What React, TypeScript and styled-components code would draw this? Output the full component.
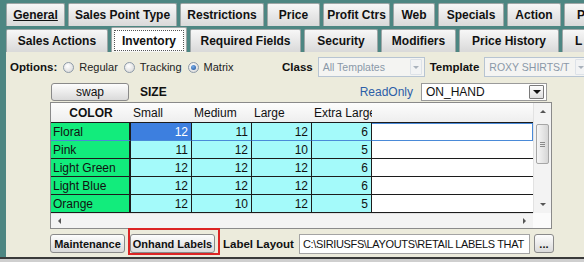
import React from "react";
import styled, { createGlobalStyle, css } from "styled-components";

const GlobalStyle = createGlobalStyle`
  html, body {
    margin: 0;
    padding: 0;
    overflow: hidden;
  }
  body {
    font-family: "Liberation Sans", Arial, sans-serif;
    font-size: 12px;
    color: #111;
  }
`;

const colors = {
  teal: "#4d8682",
  beige: "#ecebdc",
  tabBorder: "#9ea6a6",
  green: "#12ec7c",
  cyan: "#a4fafa",
  selected: "#3d7fdf",
  line: "#1c1c1c",
  focus: "#4a8ad8",
};

const Window = styled.div`
  width: 584px;
  height: 262px;
  display: flex;
  flex-direction: column;
  overflow: hidden;
`;

const Body = styled.div`
  flex: 1;
  min-height: 0;
  display: flex;
  flex-direction: column;
  background: ${colors.teal};
  padding: 3px 0 0 6px;
`;

const Footer = styled.div`
  height: 5px;
  flex-shrink: 0;
  box-sizing: border-box;
  border-top: 2px solid #3a3a3a;
  background: #cfcfcf;
`;

const TabRow = styled.div<{ $second?: boolean }>`
  display: flex;
  gap: 3px;
  flex-shrink: 0;
  overflow: hidden;
  align-items: flex-end;
  margin-top: ${(p) => (p.$second ? 1 : 0)}px;
  height: ${(p) => (p.$second ? 25 : 23)}px;
`;

const Tab = styled.div<{ $w: number; $active?: boolean; $clip?: boolean }>`
  flex: 0 0 ${(p) => p.$w}px;
  height: 23px;
  box-sizing: border-box;
  display: flex;
  align-items: center;
  justify-content: ${(p) => (p.$clip ? "flex-start" : "center")};
  padding-left: ${(p) => (p.$clip ? 12 : 0)}px;
  font-weight: bold;
  font-size: 12px;
  white-space: nowrap;
  overflow: hidden;
  background: linear-gradient(#f7f7f7, #d9d9d9);
  border: 1px solid ${colors.tabBorder};
  border-bottom: none;
  border-radius: 2px 2px 0 0;

  ${(p) =>
    p.$active &&
    css`
      height: 25px;
      padding: 2px 2px 1px;
      background: #f6f6f4;
    `}
`;

const Mnemonic = styled.span`
  text-decoration: underline;
`;

const FocusBox = styled.span`
  flex: 1;
  align-self: stretch;
  display: flex;
  align-items: center;
  justify-content: center;
  background: #fff;
  border: 1px dotted #555;
`;

const Content = styled.div`
  flex: 1;
  min-height: 0;
  display: flex;
  flex-direction: column;
  background: ${colors.beige};
  padding: 5px 0 0 4px;
`;

const OptionsRow = styled.div`
  height: 20px;
  display: flex;
  align-items: center;
  font-size: 11px;
`;

const OptionsGroup = styled.div`
  flex: 0 0 272px;
  display: flex;
  align-items: center;
`;

const FieldLabel = styled.span<{ $gap?: number }>`
  font-weight: bold;
  font-size: 11.5px;
  margin-right: ${(p) => p.$gap ?? 5}px;
  white-space: nowrap;
`;

const RadioItem = styled.label`
  display: flex;
  align-items: center;
  gap: 5px;
  margin-left: 6px;
  color: #222;
`;

const Radio = styled.span<{ $on?: boolean }>`
  width: 11px;
  height: 11px;
  box-sizing: border-box;
  border-radius: 50%;
  border: 1px solid #8d9aa8;
  background: radial-gradient(circle at 40% 35%, #ffffff, #d2d2d2);
  display: inline-flex;
  align-items: center;
  justify-content: center;

  ${(p) =>
    p.$on &&
    css`
      &::after {
        content: "";
        width: 5px;
        height: 5px;
        border-radius: 50%;
        background: radial-gradient(circle at 40% 35%, #78aee8, #1b4d96);
      }
    `}
`;

const Combo = styled.div<{ $w: number; $disabled?: boolean }>`
  flex: 0 0 ${(p) => p.$w}px;
  height: ${(p) => (p.$disabled ? 20 : 18)}px;
  box-sizing: border-box;
  display: flex;
  align-items: center;
  overflow: hidden;
  background: ${(p) => (p.$disabled ? "#f4f4f2" : "#fff")};
  border: 1px solid ${(p) => (p.$disabled ? "#b7c4d2" : "#9a9a9a")};
  color: ${(p) => (p.$disabled ? "#8a98a8" : "#111")};
  font-size: ${(p) => (p.$disabled ? 10.5 : 12)}px;
  margin-right: 5px;
`;

const ComboText = styled.span`
  flex: 1;
  padding-left: 4px;
  white-space: nowrap;
  overflow: hidden;
`;

const ComboArrow = styled.span<{ $disabled?: boolean }>`
  flex: 0 0 ${(p) => (p.$disabled ? 12 : 15)}px;
  height: ${(p) => (p.$disabled ? 16 : 14)}px;
  margin-right: 2px;
  box-sizing: border-box;
  display: flex;
  align-items: center;
  justify-content: center;
  border: 1px solid ${(p) => (p.$disabled ? "#dde2e8" : "#7a7a7a")};
  background: ${(p) => (p.$disabled ? "#f2f3f4" : "linear-gradient(#fdfdfd, #dedede)")};
  border-radius: 1px;

  &::after {
    content: "";
    border-left: ${(p) => (p.$disabled ? 3 : 4)}px solid transparent;
    border-right: ${(p) => (p.$disabled ? 3 : 4)}px solid transparent;
    border-top: ${(p) => (p.$disabled ? 3 : 4)}px solid ${(p) => (p.$disabled ? "#a9b2bc" : "#111")};
  }
`;

const GridArea = styled.div`
  margin-left: 40px;
  width: 502px;
  display: flex;
  flex-direction: column;
`;

const GridTop = styled.div`
  margin-top: 6px;
  height: 18px;
  display: flex;
  align-items: center;
`;

const Button = styled.button<{ $w: number; $bold?: boolean }>`
  flex: 0 0 ${(p) => p.$w}px;
  height: 19px;
  box-sizing: border-box;
  padding: 0;
  font-family: inherit;
  font-size: ${(p) => (p.$bold ? 11 : 12)}px;
  font-weight: ${(p) => (p.$bold ? "bold" : "normal")};
  color: #111;
  background: linear-gradient(#fdfdfd, #dadada);
  border: 1px solid #8a8a8a;
  border-radius: 3px;
  white-space: nowrap;
`;

const SwapButton = styled(Button)`
  height: 18px;
  margin-left: 1px;
`;

const AxisLabel = styled.span`
  font-weight: bold;
  margin-left: 11px;
`;

const ReadOnly = styled.span`
  flex: 1;
  text-align: right;
  padding-right: 8px;
  color: #2c5ea8;
`;

const Table = styled.div`
  margin-top: 1px;
  display: grid;
  grid-template-columns: 80px 61px 60px 60px 60px 161px 18px;
  grid-template-rows: 20px repeat(5, 18px) 15px;
  border: 1px solid #8a8a8a;
  background: #fff;
`;

const HeadCell = styled.div<{ $center?: boolean }>`
  display: flex;
  align-items: center;
  justify-content: ${(p) => (p.$center ? "center" : "flex-start")};
  padding-left: ${(p) => (p.$center ? 0 : 2)}px;
  font-weight: ${(p) => (p.$center ? "bold" : "normal")};
  background: linear-gradient(#fdfdfd, #eeeeee);
  border-bottom: 1px solid ${colors.line};
  white-space: nowrap;
  overflow: hidden;
`;

type CellKind = "name" | "num" | "sel" | "blank";

const Cell = styled.div<{ $kind: CellKind; $first?: boolean }>`
  box-sizing: border-box;
  display: flex;
  align-items: center;
  white-space: nowrap;
  border-bottom: 1px solid ${(p) => (p.$first ? colors.focus : colors.line)};
  ${(p) =>
    p.$kind === "name" &&
    css`
      background: ${colors.green};
      padding-left: 2px;
      border-right: 2px solid ${colors.line};
    `}
  ${(p) =>
    (p.$kind === "num" || p.$kind === "sel") &&
    css`
      justify-content: flex-end;
      padding-right: 3px;
      background: ${p.$kind === "sel" ? colors.selected : colors.cyan};
      color: ${p.$kind === "sel" ? "#fff" : "#111"};
      border-right: 1px solid ${colors.line};
    `}
  ${(p) =>
    p.$kind === "blank" &&
    css`
      background: #fff;
      ${p.$first &&
      css`
        border: 1px solid ${colors.focus};
        border-left: none;
      `}
    `}
`;

const VScroll = styled.div`
  grid-column: 7;
  grid-row: 1 / span 6;
  display: flex;
  flex-direction: column;
  align-items: center;
  background: #f3f3f3;
  border-left: 1px solid #e2e2e2;
`;

const ArrowBox = styled.span<{ $dir: "up" | "down" | "left" | "right" }>`
  flex: 0 0 17px;
  width: 17px;
  display: flex;
  align-items: center;
  justify-content: center;

  &::after {
    content: "";
    ${(p) =>
      p.$dir === "up" &&
      css`
        border-left: 3px solid transparent;
        border-right: 3px solid transparent;
        border-bottom: 3px solid #555;
      `}
    ${(p) =>
      p.$dir === "down" &&
      css`
        border-left: 3px solid transparent;
        border-right: 3px solid transparent;
        border-top: 3px solid #555;
      `}
    ${(p) =>
      p.$dir === "left" &&
      css`
        border-top: 3px solid transparent;
        border-bottom: 3px solid transparent;
        border-right: 3px solid #555;
      `}
    ${(p) =>
      p.$dir === "right" &&
      css`
        border-top: 3px solid transparent;
        border-bottom: 3px solid transparent;
        border-left: 3px solid #555;
      `}
  }
`;

const Thumb = styled.span`
  margin-top: 4px;
  width: 13px;
  height: 40px;
  box-sizing: border-box;
  border: 1px solid #a6a6a6;
  border-radius: 2px;
  background: linear-gradient(90deg, #f6f6f6, #d6d6d6);
  display: flex;
  flex-direction: column;
  align-items: center;
  justify-content: center;
  gap: 1px;

  & > i {
    width: 5px;
    height: 1px;
    background: #8a8a8a;
  }
`;

const Track = styled.span`
  flex: 1;
`;

const HScroll = styled.div`
  grid-column: 1 / span 6;
  grid-row: 7;
  display: flex;
  align-items: center;
  justify-content: space-between;
  background: #f3f3f3;
  border-top: 1px solid #e0e0e0;
`;

const Corner = styled.div`
  grid-column: 7;
  grid-row: 7;
  background: #fbfbfb;
`;

const BottomRow = styled.div`
  margin-top: 5px;
  height: 19px;
  display: flex;
  align-items: center;
`;

const Highlight = styled.span`
  position: relative;
  display: flex;
  margin-left: 5px;
  margin-right: 8px;

  &::after {
    content: "";
    position: absolute;
    left: -2px;
    right: -5px;
    top: -6px;
    bottom: -2px;
    border: 2px solid #dc2424;
    pointer-events: none;
  }
`;

const PathField = styled.div`
  flex: 0 0 231px;
  height: 20px;
  box-sizing: border-box;
  display: flex;
  align-items: center;
  padding-left: 3px;
  background: #fff;
  border: 1px solid #a4a4a4;
  font-size: 11px;
  letter-spacing: -0.35px;
  white-space: nowrap;
  overflow: hidden;
  margin-right: 4px;
`;

const DotsButton = styled(Button)`
  flex-basis: 20px;
  font-weight: bold;
  font-size: 11px;
  line-height: 10px;
`;

const topTabs = [
  { label: "General", w: 59, mnemonic: true },
  { label: "Sales Point Type", w: 109 },
  { label: "Restrictions", w: 84 },
  { label: "Price", w: 53 },
  { label: "Profit Ctrs", w: 67 },
  { label: "Web", w: 42 },
  { label: "Specials", w: 66 },
  { label: "Action", w: 54 },
  { label: "P", w: 60, clip: true },
];

const lowerTabs = [
  { label: "Sales Actions", w: 102 },
  { label: "Inventory", w: 76, active: true },
  { label: "Required Fields", w: 111 },
  { label: "Security", w: 74 },
  { label: "Modifiers", w: 75 },
  { label: "Price History", w: 100 },
  { label: "L", w: 60, clip: true },
];

const sizes = ["Small", "Medium", "Large", "Extra Large"];

const rows: { color: string; qty: number[] }[] = [
  { color: "Floral", qty: [12, 11, 12, 6] },
  { color: "Pink", qty: [11, 12, 10, 5] },
  { color: "Light Green", qty: [12, 12, 12, 6] },
  { color: "Light Blue", qty: [12, 12, 12, 6] },
  { color: "Orange", qty: [12, 10, 12, 5] },
];

const App = () => {
  return (
    <Window>
      <GlobalStyle />
      <Body>
        <TabRow>
          {topTabs.map((t) => (
            <Tab key={t.label} $w={t.w} $clip={t.clip}>
              {t.mnemonic ? <Mnemonic>{t.label}</Mnemonic> : t.label}
            </Tab>
          ))}
        </TabRow>
        <TabRow $second>
          {lowerTabs.map((t) => (
            <Tab key={t.label} $w={t.w} $clip={t.clip} $active={t.active}>
              {t.active ? <FocusBox>{t.label}</FocusBox> : t.label}
            </Tab>
          ))}
        </TabRow>

        <Content>
          <OptionsRow>
            <OptionsGroup>
              <FieldLabel $gap={0}>Options:</FieldLabel>
              <RadioItem>
                <Radio />
                Regular
              </RadioItem>
              <RadioItem>
                <Radio />
                Tracking
              </RadioItem>
              <RadioItem>
                <Radio $on />
                Matrix
              </RadioItem>
            </OptionsGroup>
            <FieldLabel>Class</FieldLabel>
            <Combo $w={107} $disabled>
              <ComboText>All Templates</ComboText>
              <ComboArrow $disabled />
            </Combo>
            <FieldLabel>Template</FieldLabel>
            <Combo $w={106} $disabled>
              <ComboText>ROXY SHIRTS/T</ComboText>
              <ComboArrow $disabled />
            </Combo>
          </OptionsRow>

          <GridArea>
            <GridTop>
              <SwapButton $w={78}>swap</SwapButton>
              <AxisLabel>SIZE</AxisLabel>
              <ReadOnly>ReadOnly</ReadOnly>
              <Combo $w={126}>
                <ComboText>ON_HAND</ComboText>
                <ComboArrow />
              </Combo>
            </GridTop>

            <Table>
              <VScroll>
                <ArrowBox $dir="up" />
                <Thumb>
                  <i />
                  <i />
                  <i />
                </Thumb>
                <Track />
                <ArrowBox $dir="down" />
              </VScroll>

              <HeadCell $center>COLOR</HeadCell>
              {sizes.map((s) => (
                <HeadCell key={s}>{s}</HeadCell>
              ))}
              <HeadCell />

              {rows.map((r, i) => (
                <React.Fragment key={r.color}>
                  <Cell $kind="name" $first={i === 0}>
                    {r.color}
                  </Cell>
                  {r.qty.map((q, j) => (
                    <Cell
                      key={j}
                      $kind={i === 0 && j === 0 ? "sel" : "num"}
                      $first={i === 0}
                    >
                      {q}
                    </Cell>
                  ))}
                  <Cell $kind="blank" $first={i === 0} />
                </React.Fragment>
              ))}

              <HScroll>
                <ArrowBox $dir="left" />
                <ArrowBox $dir="right" />
              </HScroll>
              <Corner />
            </Table>

            <BottomRow>
              <Button $w={75} $bold>
                Maintenance
              </Button>
              <Highlight>
                <Button $w={85} $bold>
                  Onhand Labels
                </Button>
              </Highlight>
              <FieldLabel>Label Layout</FieldLabel>
              <PathField>C:\SIRIUSFS\LAYOUTS\RETAIL LABELS THAT</PathField>
              <DotsButton $w={20} $bold>
                ...
              </DotsButton>
            </BottomRow>
          </GridArea>
        </Content>
      </Body>
      <Footer />
    </Window>
  );
};

export default App;
